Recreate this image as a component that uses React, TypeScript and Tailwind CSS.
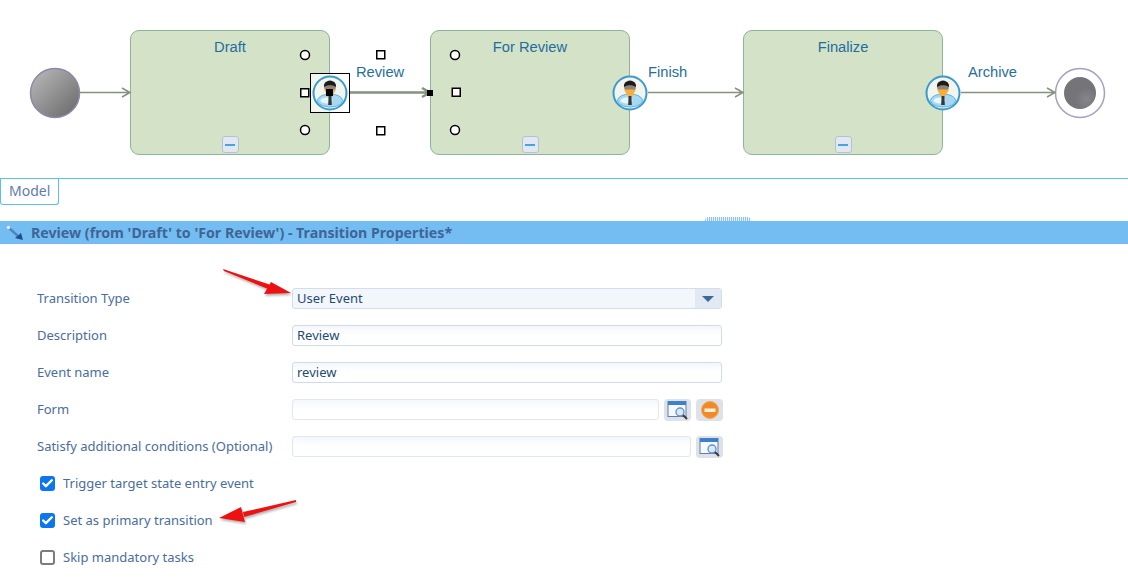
import React from 'react';
import { Check } from 'lucide-react';

const PersonIcon: React.FC<{ x: number }> = ({ x }) => (
  <g transform={`translate(${x - 18} 75)`}>
    <circle cx="18" cy="18" r="16.5" fill="#f1f5ee" stroke="#3a9ad0" strokeWidth="2" />
    <ellipse cx="18" cy="25.5" rx="12.5" ry="6.5" fill="#a6d8f2" stroke="#5db4e0" strokeWidth="1" />
    <ellipse cx="14.5" cy="25.5" rx="6" ry="3" fill="#e8f5fb" />
    <circle cx="18" cy="11.5" r="6" fill="#8f8378" />
    <path d="M12 12 C11 3.5 25 3.5 24 12 C21 9.5 15 9.5 12 12Z" fill="#1c1c1c" />
    <path d="M12 14.5 H24 L19.8 22 H16.2Z" fill="#f6ae3e" />
    <path d="M16.6 21 H19.4 L19.8 30 H16.2Z" fill="#30383e" />
  </g>
);

const MinusButton = () => (
  <div className="flex h-[17px] w-[17px] items-center justify-center rounded-[3px] border border-[#b4c2d4] bg-[#e2e8f2]">
    <div className="h-[2px] w-[10px] bg-[#45a5e4]" />
  </div>
);

const StateNode: React.FC<{ x: number; label: string }> = ({ x, label }) => (
  <div
    className="absolute top-[30px] flex h-[125px] w-[200px] flex-col items-center justify-between rounded-[9px] border border-[#8db59b] bg-[#d4e2c8] pb-[1px] pt-[8px] text-[14.7px] leading-[17px] text-[#1f6e9e]"
    style={{ left: x }}
  >
    {label}
    <MinusButton />
  </div>
);

const EdgeLabel: React.FC<{ x: number; label: string }> = ({ x, label }) => (
  <div className="absolute top-[64px] text-[14.7px] leading-[17px] text-[#1f6e9e]" style={{ left: x }}>
    {label}
  </div>
);

const SearchIcon = () => (
  <div className="flex h-[22px] w-[27px] items-center justify-center rounded-[4px] bg-[#dde2ea]">
    <svg width="22" height="20" viewBox="0 0 22 20">
      <rect x="1" y="1.5" width="18" height="15" fill="#f5f8fc" stroke="#5f7fa8" />
      <rect x="1" y="1.5" width="18" height="3.5" fill="#3b80cc" />
      <circle cx="13" cy="12" r="4" fill="#d5e9f8" stroke="#6a95bd" strokeWidth="1.4" />
      <path d="M16 15 L20 19" stroke="#3a3a3a" strokeWidth="2" />
    </svg>
  </div>
);

const ClearIcon = () => (
  <div className="flex h-[22px] w-[27px] items-center justify-center rounded-[4px] bg-[#dde2ea]">
    <svg width="20" height="20" viewBox="0 0 20 20">
      <circle cx="10" cy="10" r="8.5" fill="#f08a24" stroke="#f3a65c" />
      <rect x="4.5" y="8.5" width="11" height="3.5" fill="#fbeee0" />
    </svg>
  </div>
);

const Label: React.FC<{ children: React.ReactNode }> = ({ children }) => (
  <div className="w-[255px] shrink-0 whitespace-nowrap text-[13px] text-[#4a6d9c]">{children}</div>
);

const TextField: React.FC<{ value?: string; width: string; light?: boolean }> = ({ value, width, light }) => (
  <div
    className={`flex h-[21px] items-center rounded-[3px] border bg-gradient-to-b from-[#f4f7fb] to-white to-50% px-1 text-[13px] text-[#1f4a75] ${width} ${
      light ? 'border-[#e1e7f0]' : 'border-[#cfdcea]'
    }`}
  >
    {value}
  </div>
);

const CheckRow: React.FC<{ label: string; checked?: boolean }> = ({ label, checked }) => (
  <div className="flex h-[37px] items-center gap-[8px]">
    {checked ? (
      <div className="flex h-[15px] w-[15px] items-center justify-center rounded-[3px] bg-[#0b76ef]">
        <Check size={13} strokeWidth={4.5} className="text-white" />
      </div>
    ) : (
      <div className="h-[15px] w-[15px] rounded-[3px] border-2 border-[#7c7c7c] bg-white" />
    )}
    <span className="whitespace-nowrap text-[13px] text-[#4a6d9c]">{label}</span>
  </div>
);

const App: React.FC = () => {
  return (
    <div className="relative h-[579px] w-[1128px] overflow-hidden bg-white font-['Noto_Sans',sans-serif]">
      {/* Workflow diagram */}
      <div className="relative h-[179px] border-b border-[#5cc0ee] font-['Liberation_Sans',sans-serif]">
        <StateNode x={130} label="Draft" />
        <StateNode x={430} label="For Review" />
        <StateNode x={743} label="Finalize" />

        <EdgeLabel x={356} label="Review" />
        <EdgeLabel x={648} label="Finish" />
        <EdgeLabel x={968} label="Archive" />

        <svg className="absolute left-0 top-0" width="1128" height="178">
          <defs>
            <linearGradient id="startFill" x1="0" y1="0" x2="1" y2="1">
              <stop offset="0%" stopColor="#bcbcbc" />
              <stop offset="100%" stopColor="#666666" />
            </linearGradient>
            <radialGradient id="endFill" cx="70%" cy="70%" r="70%">
              <stop offset="0%" stopColor="#87878b" />
              <stop offset="50%" stopColor="#747479" />
            </radialGradient>
          </defs>
          <circle cx="55" cy="93" r="24.5" fill="url(#startFill)" stroke="#8d88a8" strokeWidth="1.5" />
          <circle cx="1080" cy="93" r="24.5" fill="white" stroke="#a59fc0" strokeWidth="1.5" />
          <circle cx="1080" cy="93" r="16" fill="url(#endFill)" />
          <g fill="none" stroke="#87917f" strokeWidth="1.5">
            <path d="M80 92.5 H130 M122 88 L130 92.5 L122 97" />
            <path d="M648 92.5 H743 M735 88 L743 92.5 L735 97" />
            <path d="M961 92.5 H1055 M1047 88 L1055 92.5 L1047 97" />
            <path d="M349 92.5 H430 M422 88 L430 92.5 L422 97" strokeWidth="2.5" />
          </g>

          {/* Selection box behind the Review transition icon */}
          <rect x="310.5" y="73.5" width="39" height="39" fill="#ffffff" fillOpacity="0.7" stroke="#000000" />
          <PersonIcon x={330} />
          <PersonIcon x={630} />
          <PersonIcon x={943} />

          {/* Connector handles */}
          <rect x="326" y="89" width="7" height="7" fill="#000000" />
          <rect x="427" y="90" width="6" height="6" fill="#000000" />
          <g fill="#ffffff" stroke="#000000" strokeWidth="1.5">
            <circle cx="305" cy="55" r="4.5" />
            <circle cx="305" cy="130" r="4.5" />
            <circle cx="455" cy="55" r="4.5" />
            <circle cx="455" cy="130" r="4.5" />
            <rect x="300.75" y="88.75" width="8" height="8" />
            <rect x="376.75" y="50.75" width="8" height="8" />
            <rect x="376.75" y="126.75" width="8" height="8" />
            <rect x="452.25" y="88.25" width="8" height="8" />
          </g>
        </svg>
      </div>

      {/* Tab strip */}
      <div className="relative h-[42px]">
        <div className="h-[26px] w-[59px] rounded-b-[3px] border-x border-b border-[#5cc0ee] pl-[8px] pt-[1px] text-[14px] text-[#5f7ca8]">
          Model
        </div>
        <div className="absolute bottom-0 left-[705px] h-[4px] w-[46px] rounded-t-full bg-[repeating-linear-gradient(90deg,#8fc3e8_0,#8fc3e8_1px,#e8f3fb_1px,#e8f3fb_2px)]" />
      </div>

      {/* Properties header */}
      <div className="flex h-[23px] items-center gap-[7px] bg-[#74bdf2] pl-[6px] text-[14.2px] font-bold text-[#3f6594]">
        <svg width="18" height="16" viewBox="0 0 18 16">
          <path d="M2 2 L13 12" stroke="#4f86bf" strokeWidth="2.5" />
          <path d="M9 13 L15 8 L17 15Z" fill="#1f4f8f" />
          <circle cx="2.5" cy="2.5" r="1.8" fill="#dcecf8" />
        </svg>
        <span className="whitespace-nowrap">Review (from 'Draft' to 'For Review') - Transition Properties*</span>
      </div>

      {/* Form */}
      <div className="pl-[37px] pt-[36px]">
        <div className="flex h-[37px] items-center">
          <Label>Transition Type</Label>
          <div className="flex h-[21px] w-[430px] items-center justify-between rounded-[3px] border border-[#d2deeb] bg-[#f3f6fb] pl-1 text-[13px] text-[#1f4a75]">
            User Event
            <div className="flex h-full w-[26px] items-center justify-center rounded-r-[3px] bg-[#e3e9f2]">
              <div className="h-0 w-0 border-x-[6px] border-t-[6px] border-x-transparent border-t-[#3c6a9c]" />
            </div>
          </div>
        </div>
        <div className="flex h-[37px] items-center">
          <Label>Description</Label>
          <TextField value="Review" width="w-[430px]" />
        </div>
        <div className="flex h-[37px] items-center">
          <Label>Event name</Label>
          <TextField value="review" width="w-[430px]" />
        </div>
        <div className="flex h-[37px] items-center">
          <Label>Form</Label>
          <TextField width="w-[367px]" light />
          <div className="ml-[5px] flex gap-[5px]">
            <SearchIcon />
            <ClearIcon />
          </div>
        </div>
        <div className="flex h-[37px] items-center">
          <Label>Satisfy additional conditions (Optional)</Label>
          <TextField width="w-[399px]" light />
          <div className="ml-[5px]">
            <SearchIcon />
          </div>
        </div>
        <div className="pl-[3px]">
          <CheckRow label="Trigger target state entry event" checked />
          <CheckRow label="Set as primary transition" checked />
          <CheckRow label="Skip mandatory tasks" />
        </div>
      </div>

      {/* Annotation arrows */}
      <svg
        className="absolute left-[215px] top-[262px] drop-shadow-[1px_2px_1px_rgba(0,0,0,0.3)]"
        width="85"
        height="40"
        viewBox="0 0 85 40"
      >
        <path d="M8 7 L9 9 L58 29 L59 24Z" fill="#ee1111" />
        <path d="M76 31 L49 32 L56 20Z" fill="#ee1111" />
      </svg>
      <svg
        className="absolute left-[215px] top-[495px] drop-shadow-[1px_2px_1px_rgba(0,0,0,0.3)]"
        width="90"
        height="32"
        viewBox="0 0 90 32"
      >
        <path d="M81 5 L81 7 L29 22 L28 17Z" fill="#ee1111" />
        <path d="M4 23 L26 12 L30 27Z" fill="#ee1111" />
      </svg>
    </div>
  );
};

export default App;
